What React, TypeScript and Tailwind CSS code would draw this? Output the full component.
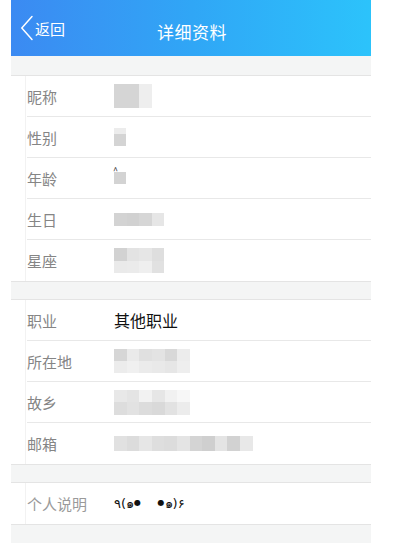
import React from "react";

const cjk = { fontFamily: '"Noto Sans CJK SC", "Noto Sans", sans-serif' };

// blurred (mosaic) value, one list of colours per row
function Mosaic({ rows, cw, ch }: { rows: string[][]; cw: number; ch: number }) {
  return (
    <div className="flex flex-col">
      {rows.map((r, i) => (
        <div key={i} className="flex">
          {r.map((c, j) => (
            <div key={j} style={{ width: cw, height: ch, background: c }} />
          ))}
        </div>
      ))}
    </div>
  );
}

function Row({
  label,
  last,
  children,
}: {
  label: string;
  last?: boolean;
  children?: React.ReactNode;
}) {
  return (
    <div
      className={`flex h-[41px] items-center ${last ? "" : "border-b border-[#e8e8e8]"}`}
    >
      <span className="w-[87px] text-[15px] leading-none text-[#858585]">{label}</span>
      <div className="flex items-center">{children}</div>
    </div>
  );
}

function Card({ children }: { children: React.ReactNode }) {
  return (
    <div className="border-y border-[#e4e4e4] bg-white">
      <div className="ml-[14px] border-l border-[#f2f2f2] pl-[1px]">{children}</div>
    </div>
  );
}

export default function App() {
  return (
    <div className="h-[543px] w-[410px] overflow-hidden bg-white" style={cjk}>
      <div className="ml-[11px] flex h-full w-[360px] flex-col bg-[#f4f5f5]">
        <div className="relative flex h-[56px] items-center bg-gradient-to-r from-[#3b8af2] via-[#30a6f6] to-[#2cc3fb] text-white">
          <div className="flex items-center pl-[9px]">
            <svg width="14" height="26" viewBox="0 0 14 26" fill="none">
              <path d="M12 1.5 L1.8 13 L12 24.5" stroke="white" strokeWidth="1.5" strokeLinecap="round" />
            </svg>
            <span className="ml-[1px] text-[15px] leading-none">返回</span>
          </div>
          <span className="absolute left-[146px] top-[23px] text-[17px] leading-none tracking-[0.5px]">
            详细资料
          </span>
        </div>

        <div className="h-[19px]" />

        <Card>
          <Row label="昵称">
            <Mosaic cw={12.5} ch={24} rows={[["#d5d5d5", "#d5d5d5", "#eeeeee"]]} />
          </Row>
          <Row label="性别">
            <Mosaic cw={12} ch={6} rows={[["#ececec"], ["#d4d4d4"], ["#d4d4d4"]]} />
          </Row>
          <Row label="年龄">
            <div className="relative">
              <span className="absolute -left-[1px] -top-[6px] text-[9px] leading-none text-[#222]">^</span>
              <Mosaic cw={12} ch={12} rows={[["#d3d3d3"]]} />
            </div>
          </Row>
          <Row label="生日">
            <Mosaic cw={12.5} ch={13} rows={[["#d3d3d3", "#d1d1d1", "#d6d6d6", "#e6e6e6"]]} />
          </Row>
          <Row label="星座" last>
            <Mosaic
              cw={12.5}
              ch={12.5}
              rows={[
                ["#d2d2d2", "#e3e3e3", "#e6e6e6", "#dedede"],
                ["#eaeaea", "#ebebeb", "#efefef", "#e1e1e1"],
              ]}
            />
          </Row>
        </Card>

        <div className="h-[17px]" />

        <Card>
          <Row label="职业">
            <span className="text-[16px] leading-none text-[#111]">其他职业</span>
          </Row>
          <Row label="所在地">
            <Mosaic
              cw={12.7}
              ch={12}
              rows={[
                ["#d6d6d6", "#eaeaea", "#e0e0e0", "#e3e3e3", "#d8d8d8", "#ececec"],
                ["#ececec", "#f0f0f0", "#ebebeb", "#e9e9e9", "#e6e6e6", "#eeeeee"],
              ]}
            />
          </Row>
          <Row label="故乡">
            <Mosaic
              cw={12.7}
              ch={12.5}
              rows={[
                ["#e8e8e8", "#e4e4e4", "#f2f2f2", "#e6e6e6", "#f1f1f1", "#f7f7f7"],
                ["#dddddd", "#e2e2e2", "#dcdcdc", "#d9d9d9", "#e2e2e2", "#ececec"],
              ]}
            />
          </Row>
          <Row label="邮箱" last>
            <Mosaic
              cw={12.6}
              ch={15}
              rows={[
                ["#e1e1e1", "#dcdcdc", "#e6e6e6", "#dedede", "#dcdcdc", "#e4e4e4", "#d4d4d4", "#cfcfcf", "#e4e4e4", "#d2d2d2", "#e8e8e8"],
              ]}
            />
          </Row>
        </Card>

        <div className="h-[17px]" />

        <Card>
          <div className="flex h-[41px] items-center">
            <span className="w-[87px] text-[15px] leading-none text-[#9a9a9a]">个人说明</span>
            <span
              className="text-[13px] leading-none text-[#111]"
              style={{ fontFamily: '"DejaVu Sans", "Noto Sans", sans-serif' }}
            >
              ٩(๑<span className="relative -top-[3px] text-[8px]">●</span>
              &nbsp;&nbsp;&nbsp;&nbsp;
              <span className="relative -top-[3px] text-[8px]">●</span>๑)۶
            </span>
          </div>
        </Card>
      </div>
    </div>
  );
}
